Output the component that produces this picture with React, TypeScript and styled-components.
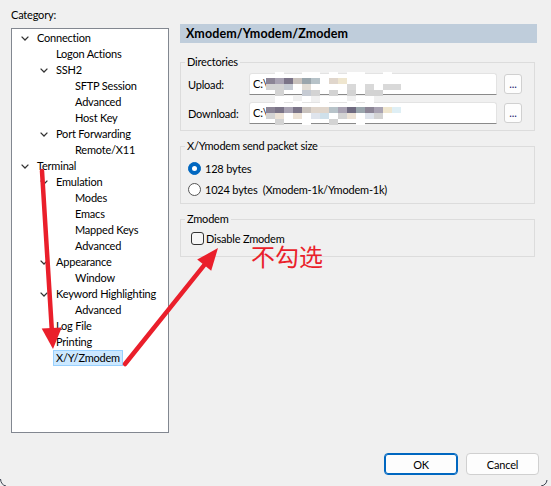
import React from "react";
import styled, { createGlobalStyle } from "styled-components";

const GlobalStyle = createGlobalStyle`
  html, body { margin: 0; padding: 0; background: #f0f0f0; }
  body { font-family: "Lato", "Noto Sans", sans-serif; font-size: 11px; color: #000; }
  * { box-sizing: border-box; }
`;

const FONT = `"Lato", "Noto Sans", sans-serif`;

const Window = styled.div`
  position: relative;
  width: 551px;
  height: 486px;
  overflow: hidden;
  background: #f0f0f0;
  padding: 7px 0 0 11px;
  font-family: ${FONT};
  font-size: 11px;
  letter-spacing: -0.2px;
`;

const Body = styled.div`
  display: flex;
  gap: 11px;
`;

const Sidebar = styled.div`
  width: 158px;
  display: flex;
  flex-direction: column;
`;

const CategoryLabel = styled.div`
  line-height: 16px;
  margin-bottom: 5px;
`;

const TreeBox = styled.div`
  height: 405px;
  background: #fff;
  border: 1px solid #828790;
  padding-top: 1px;
`;

const Row = styled.div<{ $level: number }>`
  height: 16px;
  display: flex;
  align-items: center;
  padding-left: ${(p) => 9 + p.$level * 19}px;
  line-height: 16px;
  white-space: nowrap;
`;

const Twisty = styled.span`
  width: 16px;
  flex: none;
  display: flex;
  align-items: center;
`;

const ItemLabel = styled.span<{ $selected?: boolean }>`
  display: inline-block;
  height: 16px;
  line-height: 14px;
  padding: 0 2px;
  margin-left: -3px;
  border: 1px solid ${(p) => (p.$selected ? "#99d1ff" : "transparent")};
  background: ${(p) => (p.$selected ? "#cce8ff" : "transparent")};
`;

const Panel = styled.div`
  width: 357px;
  padding-top: 17px;
  display: flex;
  flex-direction: column;
`;

const Header = styled.div`
  height: 19px;
  background: #bfcddb;
  font-weight: bold;
  font-size: 12.5px;
  letter-spacing: 0.1px;
  line-height: 19px;
  padding-left: 6px;
`;

const Group = styled.fieldset<{ $top: number; $padLeft: number; $pad: string }>`
  margin: ${(p) => p.$top}px 2px 0 0;
  padding: ${(p) => p.$pad};
  padding-left: ${(p) => p.$padLeft}px;
  border: 1px solid #dcdcdc;
  min-width: 0;

  & > legend {
    margin-left: ${(p) => 4 - p.$padLeft}px;
  }
`;

const Legend = styled.legend`
  padding: 0 2px;
  line-height: 16px;
`;

const DirRow = styled.div<{ $gap?: number }>`
  display: flex;
  align-items: center;
  height: 22px;
  margin-top: ${(p) => p.$gap ?? 0}px;
`;

const DirLabel = styled.span`
  width: 61px;
  flex: none;
`;

const PathField = styled.div`
  position: relative;
  width: 249px;
  height: 22px;
  background: #fff;
  border: 1px solid #e3e3e3;
  border-bottom-color: #8a8a8a;
  border-radius: 3px 3px 0 0;
  padding-left: 3px;
  line-height: 20px;
`;

const Mosaic = styled.svg`
  position: absolute;
  left: 16px;
  top: -2px;
  pointer-events: none;
`;

const BrowseButton = styled.button`
  width: 18px;
  height: 20px;
  margin-left: 7px;
  padding: 0;
  border: 1px solid #d0d0d0;
  border-radius: 3px;
  background: #fdfdfd;
  color: #1a1a6e;
  font-family: ${FONT};
  font-size: 11px;
  line-height: 14px;
`;

const OptionRow = styled.label`
  display: flex;
  align-items: center;
  height: 21px;
  gap: 4px;
`;

const Radio = styled.span<{ $checked?: boolean }>`
  width: 13px;
  height: 13px;
  border-radius: 50%;
  flex: none;
  border: 1px solid ${(p) => (p.$checked ? "#0067c0" : "#555")};
  background: ${(p) => (p.$checked ? "#0067c0" : "#fff")};
  display: flex;
  align-items: center;
  justify-content: center;
  &::after {
    content: "";
    width: 5px;
    height: 5px;
    border-radius: 50%;
    background: #fff;
    display: ${(p) => (p.$checked ? "block" : "none")};
  }
`;

const CheckRow = styled.label`
  display: flex;
  align-items: center;
  height: 18px;
  gap: 2px;
`;

const CheckBox = styled.span`
  width: 13px;
  height: 13px;
  flex: none;
  border: 1px solid #333;
  border-radius: 3px;
  background: #f6f6f6;
`;

const Footer = styled.div`
  display: flex;
  justify-content: flex-end;
  gap: 8px;
  margin-top: 20px;
  padding-right: 12px;
`;

const DialogButton = styled.button<{ $primary?: boolean; $w: number }>`
  width: ${(p) => p.$w}px;
  height: 22px;
  padding: 0;
  border-radius: 4px;
  background: #fdfdfd;
  border: 1px solid ${(p) => (p.$primary ? "#0067c0" : "#d0d0d0")};
  box-shadow: ${(p) => (p.$primary ? "inset 0 0 0 1px #0067c0" : "none")};
  font-family: ${FONT};
  font-size: 11px;
  letter-spacing: -0.2px;
  color: #000;
`;

const Overlay = styled.svg`
  position: absolute;
  left: 0;
  top: 0;
  pointer-events: none;
`;

const Note = styled.div`
  position: absolute;
  left: 251px;
  top: 247px;
  font-family: "Noto Sans CJK SC", sans-serif;
  font-size: 24px;
  letter-spacing: 0;
  line-height: 18px;
  color: #ea1f2b;
`;

const PALETTE: Record<string, string> = {
  a: "#8c8596", b: "#a9a3b3", c: "#7b7488", d: "#c9c2bd", e: "#e0d6cc",
  f: "#b7c3c9", g: "#6f6a80", h: "#9aa6ad", i: "#efe6cf", j: "#dfeff5",
  l: "#d3d3d3", m: "#c6cbd3", n: "#e2ddd6", o: "#d9d9d9", p: "#ece2d6",
  q: "#dfe4ec", r: "#cfe0ea", w: "#ffffff",
};

const UPLOAD_CELLS = [
  ".w..ww.w.ww..w..",
  "abcdhf.ei.......",
  "llm.n....o.o.oo.",
  ".l..ml.l.l.ll...",
  ".ww.w.www.ww....",
];

const DOWNLOAD_CELLS = [
  ".w.w..w..w.w....",
  "acbcdeefbghabij.",
  "lp.p.qr.lp.ql...",
  ".l..w..l..w.....",
];

function Blur({ cells }: { cells: string[] }) {
  const cw = 9;
  const ch = 6;
  return (
    <Mosaic width={cells[0].length * cw} height={cells.length * ch}>
      {cells.flatMap((row, y) =>
        row.split("").map((k, x) =>
          k === "." ? null : (
            <rect key={`${x}-${y}`} x={x * cw} y={y * ch} width={cw} height={ch} fill={PALETTE[k]} />
          )
        )
      )}
    </Mosaic>
  );
}

function Chevron() {
  return (
    <svg width="8" height="5" viewBox="0 0 8 5">
      <path d="M0.6 0.6 L4 4 L7.4 0.6" fill="none" stroke="#333" strokeWidth="1.25" />
    </svg>
  );
}

type Node = { label: string; level: number; open?: boolean; selected?: boolean };

const TREE: Node[] = [
  { label: "Connection", level: 0, open: true },
  { label: "Logon Actions", level: 1 },
  { label: "SSH2", level: 1, open: true },
  { label: "SFTP Session", level: 2 },
  { label: "Advanced", level: 2 },
  { label: "Host Key", level: 2 },
  { label: "Port Forwarding", level: 1, open: true },
  { label: "Remote/X11", level: 2 },
  { label: "Terminal", level: 0, open: true },
  { label: "Emulation", level: 1, open: true },
  { label: "Modes", level: 2 },
  { label: "Emacs", level: 2 },
  { label: "Mapped Keys", level: 2 },
  { label: "Advanced", level: 2 },
  { label: "Appearance", level: 1, open: true },
  { label: "Window", level: 2 },
  { label: "Keyword Highlighting", level: 1, open: true },
  { label: "Advanced", level: 2 },
  { label: "Log File", level: 1 },
  { label: "Printing", level: 1 },
  { label: "X/Y/Zmodem", level: 1, selected: true },
];

function Arrow({ tail, tip, wingA, wingB }: { tail: [number, number]; tip: [number, number]; wingA: [number, number]; wingB: [number, number] }) {
  const red = "#ea1f2b";
  const bx = (wingA[0] + wingB[0]) / 2;
  const by = (wingA[1] + wingB[1]) / 2;
  return (
    <g>
      <line x1={tail[0]} y1={tail[1]} x2={bx} y2={by} stroke={red} strokeWidth="4.5" strokeLinecap="round" />
      <polygon points={`${wingA[0]},${wingA[1]} ${tip[0]},${tip[1]} ${wingB[0]},${wingB[1]}`} fill={red} />
    </g>
  );
}

export default function App() {
  return (
    <>
      <GlobalStyle />
      <Window>
        <Body>
          <Sidebar>
            <CategoryLabel>Category:</CategoryLabel>
            <TreeBox>
              {TREE.map((n, i) => (
                <Row key={i} $level={n.level}>
                  <Twisty>{n.open ? <Chevron /> : null}</Twisty>
                  <ItemLabel $selected={n.selected}>{n.label}</ItemLabel>
                </Row>
              ))}
            </TreeBox>
          </Sidebar>
          <Panel>
            <Header>Xmodem/Ymodem/Zmodem</Header>
            <Group $top={11} $padLeft={7} $pad="3px 12px 6px">
              <Legend>Directories</Legend>
              <DirRow>
                <DirLabel>Upload:</DirLabel>
                <PathField>
                  C:\
                  <Blur cells={UPLOAD_CELLS} />
                </PathField>
                <BrowseButton>...</BrowseButton>
              </DirRow>
              <DirRow $gap={7}>
                <DirLabel>Download:</DirLabel>
                <PathField>
                  C:\
                  <Blur cells={DOWNLOAD_CELLS} />
                </PathField>
                <BrowseButton>...</BrowseButton>
              </DirRow>
            </Group>
            <Group $top={7} $padLeft={7} $pad="4px 8px 3px">
              <Legend>X/Ymodem send packet size</Legend>
              <OptionRow>
                <Radio $checked />
                128 bytes
              </OptionRow>
              <OptionRow>
                <Radio />
                1024 bytes&nbsp;&nbsp;(Xmodem-1k/Ymodem-1k)
              </OptionRow>
            </Group>
            <Group $top={7} $padLeft={10} $pad="2px 8px 9px">
              <Legend>Zmodem</Legend>
              <CheckRow>
                <CheckBox />
                Disable Zmodem
              </CheckRow>
            </Group>
          </Panel>
        </Body>
        <Footer>
          <DialogButton $primary $w={74}>OK</DialogButton>
          <DialogButton $w={73}>Cancel</DialogButton>
        </Footer>
        <Note>不勾选</Note>
        <Overlay width="551" height="486" viewBox="0 0 551 486">
          <Arrow tail={[42, 171]} tip={[53, 349]} wingA={[41.7, 328.6]} wingB={[61.7, 327.4]} />
          <Arrow tail={[125, 364]} tip={[218, 248]} wingA={[197.2, 259.6]} wingB={[211.2, 270.8]} />
          {/* rounded window corners at the bottom edge */}
          <path d="M0.5 479 Q1 485 6 486" fill="none" stroke="#3c4250" strokeWidth="1" />
          <path d="M547 480 Q546.5 485 541 486" fill="none" stroke="#3c4250" strokeWidth="1" />
        </Overlay>
      </Window>
    </>
  );
}
